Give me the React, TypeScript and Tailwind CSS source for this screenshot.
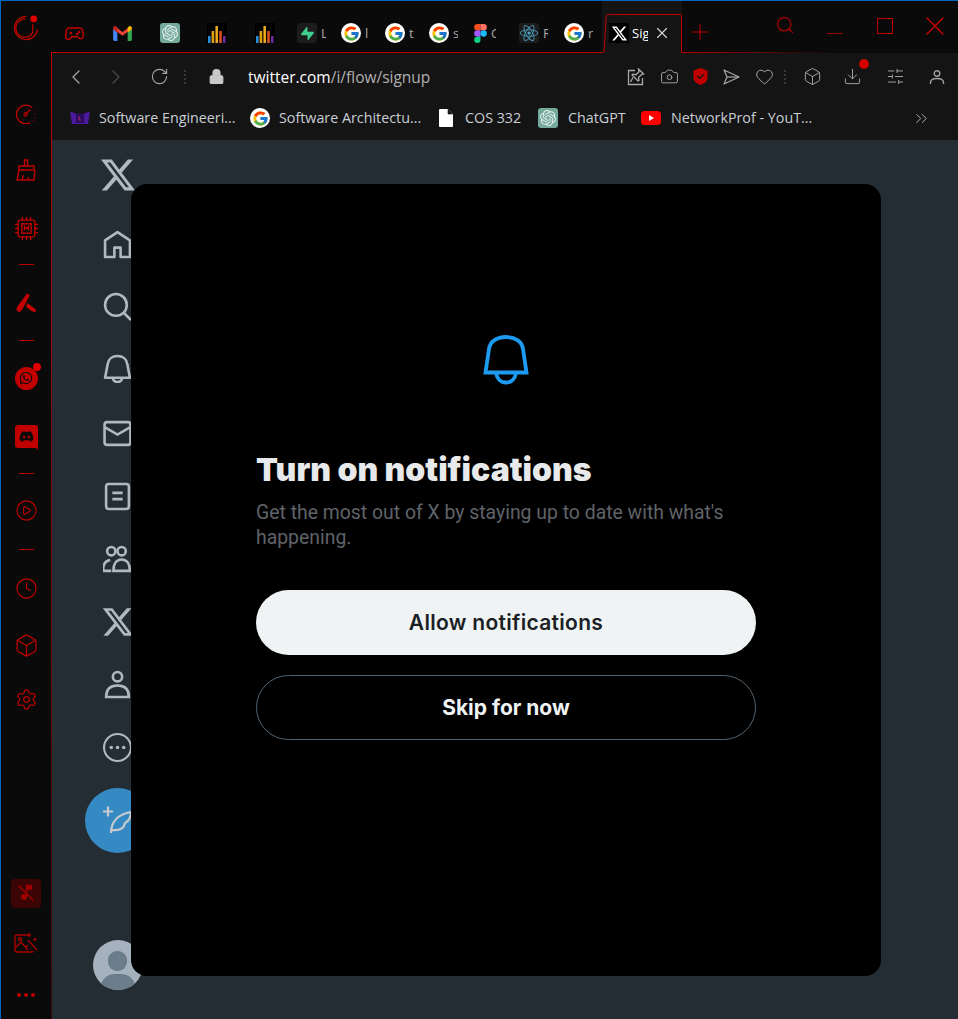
import React from "react";
import {
  Box,
  Camera,
  ChevronLeft,
  ChevronRight,
  ChevronsRight,
  Clock,
  CirclePlay,
  Download,
  Heart,
  Lock,
  Plus,
  RotateCw,
  Search,
  Settings,
  SlidersHorizontal,
  X,
} from "lucide-react";
import { FaDiscord, FaReact, FaWhatsapp } from "react-icons/fa";
import { FcGoogle } from "react-icons/fc";
import { SiOpenai, SiSupabase } from "react-icons/si";

const X_PATH =
  "M18.244 2.25h3.308l-7.227 8.26 8.502 11.24H16.17l-5.214-6.817L4.99 21.75H1.68l7.73-8.835L1.254 2.25H8.08l4.713 6.231zm-1.161 17.52h1.833L7.084 4.126H5.117z";

const XLogo = ({ className }: { className: string }) => (
  <svg viewBox="0 0 24 24" className={className} fill="currentColor">
    <path d={X_PATH} />
  </svg>
);

const GoogleIcon = () => (
  <span className="flex h-5 w-5 shrink-0 items-center justify-center rounded-full bg-white">
    <FcGoogle className="h-[17px] w-[17px]" />
  </span>
);

const GptIcon = () => (
  <span className="flex h-5 w-5 shrink-0 items-center justify-center rounded-[3px] bg-[#74aa9c]">
    <SiOpenai className="h-4 w-4 text-[#e4efec]" />
  </span>
);

const BarsIcon = () => (
  <svg viewBox="0 0 20 20" className="h-5 w-5 shrink-0">
    <rect width="20" height="20" fill="#000" />
    <rect x="1" y="13" width="2.6" height="7" fill="#2b8fd8" />
    <rect x="4.6" y="8" width="2.6" height="12" fill="#e0a010" />
    <rect x="8.4" y="3" width="2.6" height="17" fill="#e8a818" />
    <rect x="12.2" y="8" width="2.6" height="12" fill="#d84f20" />
    <rect x="16" y="13" width="2.6" height="7" fill="#6a2ca0" />
  </svg>
);

const GmailIcon = () => (
  <svg viewBox="0 0 20 16" className="h-[15px] w-[19px] shrink-0">
    <path d="M0 3v11.5A1.5 1.5 0 0 0 1.500 16H4.500V7z" fill="#4285f4" />
    <path d="M20 3v11.500a1.500 1.500 0 0 1-1.500 1.500H15.500V7z" fill="#34a853" />
    <path d="M0 3l10 7.500L20 3 18 .5 10 6.500 2 .5z" fill="#ea4335" />
    <path d="M0 3.500V2a2 2 0 0 1 3.200-1.500L4.500 1.500V7z" fill="#c5221f" />
    <path d="M20 3.500V2a2 2 0 0 0-3.200-1.500L15.500 1.500V7z" fill="#fbbc04" />
  </svg>
);

const FigmaIcon = () => (
  <svg viewBox="0 0 12 18" className="h-[19px] w-[13px] shrink-0">
    <path d="M3 0h3v6H3a3 3 0 0 1 0-6z" fill="#f24e1e" />
    <path d="M6 0h3a3 3 0 0 1 0 6H6z" fill="#ff7262" />
    <path d="M3 6h3v6H3a3 3 0 0 1 0-6z" fill="#a259ff" />
    <circle cx="9" cy="9" r="3" fill="#1abcfe" />
    <path d="M3 12h3v3a3 3 0 1 1-3-3z" fill="#0acf83" />
  </svg>
);

const GamepadIcon = () => (
  <svg viewBox="0 0 20 14" className="h-[13px] w-[19px] shrink-0" fill="none" stroke="#c80000" strokeWidth="1.500">
    <path d="M5 1h10a4 4 0 0 1 4 3.500l.5 5c.2 2.500-2.500 4-4.300 2.300L13 10.500H7l-2.200 2.300C3 14.500.3 13 .5 9.500l.5-5A4 4 0 0 1 5 1z" />
    <path d="M4.500 6.500h3M6 5v3" />
    <circle cx="13" cy="7.500" r=".6" />
    <circle cx="15" cy="5.500" r=".6" />
  </svg>
);

const tabs: { icon: React.ReactNode; label: string; width: string }[] = [
  { icon: <GamepadIcon />, label: "", width: "w-[48px]" },
  { icon: <GmailIcon />, label: "", width: "w-[47px]" },
  { icon: <GptIcon />, label: "", width: "w-[47px]" },
  { icon: <BarsIcon />, label: "", width: "w-[48px]" },
  { icon: <BarsIcon />, label: "", width: "w-[42px]" },
  {
    icon: (
      <span className="flex h-5 w-5 shrink-0 items-center justify-center rounded-[3px] bg-[#1c1c1c]">
        <SiSupabase className="h-[13px] w-[13px] text-[#3ecf8e]" />
      </span>
    ),
    label: "L",
    width: "w-[44px]",
  },
  { icon: <GoogleIcon />, label: "l", width: "w-[44px]" },
  { icon: <GoogleIcon />, label: "t", width: "w-[44px]" },
  { icon: <GoogleIcon />, label: "s", width: "w-[45px]" },
  { icon: <FigmaIcon />, label: "C", width: "w-[45px]" },
  {
    icon: (
      <span className="flex h-5 w-5 shrink-0 items-center justify-center rounded-[3px] bg-[#1c1c1c]">
        <FaReact className="h-[18px] w-[18px] text-[#4fa8c8]" />
      </span>
    ),
    label: "R",
    width: "w-[45px]",
  },
  { icon: <GoogleIcon />, label: "r", width: "w-[35px]" },
];

const TabStrip = () => (
  <div className="flex h-[52px] shrink-0 items-stretch">
    <div className="flex w-[550px] shrink-0 items-start border-b border-[#c00000] pl-[13px] pt-[22px]">
      {tabs.map((t, i) => (
        <div key={i} className={"flex h-5 shrink-0 items-center gap-[4px] overflow-hidden " + t.width}>
          {t.icon}
          <span className="w-[5px] overflow-hidden text-[13px] leading-5 text-[#a8a8a8]">{t.label}</span>
        </div>
      ))}
    </div>
    <div className="relative flex w-[80px] shrink-0 items-start bg-[#141414] pl-[7px] pt-[22px]">
      <svg viewBox="0 0 80 39" className="absolute bottom-0 left-0 h-[39px] w-[80px]" fill="none" stroke="#c00000">
        <path d="M0 38.500h.5C1.500 38.500 2 38 2.200 37L4 3.500C4.200 1.500 5.500 .5 7.500 .5h71C79.500 .5 79.500 1 79.500 2v36.500" />
      </svg>
      <span className="flex h-5 w-5 shrink-0 items-center justify-center bg-black">
        <XLogo className="h-[17px] w-[17px] text-white" />
      </span>
      <span className="ml-[3px] w-[16px] overflow-hidden text-[13px] leading-5 text-white">Sign</span>
      <X className="ml-[5px] mt-[1px] h-[18px] w-[18px] text-[#d8d8d8]" strokeWidth={1.500} />
    </div>
    <div className="relative flex flex-1 items-start">
      <div className="absolute inset-x-0 bottom-0 h-px bg-linear-to-r from-[#c00000] to-transparent to-[55%]" />
      <Plus className="ml-[5px] mt-[18px] h-[26px] w-[26px] text-[#b80000]" strokeWidth={1} />
      <Search className="ml-[62px] mt-[14px] h-[20px] w-[20px] text-[#960000]" strokeWidth={1.750} />
      <div className="ml-[32px] mt-[32px] h-px w-[16px] bg-[#960000]" />
      <div className="ml-[34px] mt-[17px] h-[16px] w-[16px] border border-[#c00000]" />
      <X className="ml-[26px] mt-[9px] h-[32px] w-[32px] text-[#c80000]" strokeWidth={1} />
    </div>
  </div>
);

const PinIcon = () => (
  <svg viewBox="0 0 18 18" className="h-[18px] w-[18px]" fill="none" stroke="#a8a8a8" strokeWidth="1.300">
    <path d="M8 2.500H1.500v14h14V10" />
    <path d="M11.500 1l5 5-2 .5-3 3 .5 3-1 .5-6-6 1-.8 3 .5 3-3z" />
    <path d="M6 9.500L3.500 14" />
  </svg>
);

const ShieldIcon = () => (
  <svg viewBox="0 0 16 18" className="h-[17px] w-[15px]">
    <path d="M8 0l7.500 2.500V10c0 4-3.500 6.500-7.500 8-4-1.500-7.500-4-7.500-8V2.500z" fill="#c00000" />
    <path d="M4.500 8.500L7 11l4.500-4.500" fill="none" stroke="#141414" strokeWidth="1.500" />
  </svg>
);

const SendIcon = () => (
  <svg viewBox="0 0 17 16" className="h-[16px] w-[17px]" fill="none" stroke="#a8a8a8" strokeWidth="1.200">
    <path d="M1 1l15 7-15 7 3-7z" strokeLinejoin="round" />
    <path d="M4 8h12" />
  </svg>
);

const UserIcon = () => (
  <svg viewBox="0 0 16 16" className="h-[16px] w-[16px]" fill="none" stroke="#a0a0a0" strokeWidth="1.400">
    <circle cx="8" cy="4.500" r="2.800" />
    <path d="M1.500 15v-1.500c0-2.500 2-4 6.500-4s6.500 1.500 6.500 4V15" />
  </svg>
);

const VDots = () => (
  <div className="flex flex-col gap-[2px]">
    <span className="h-[2px] w-[2px] bg-[#3a3a3a]" />
    <span className="h-[2px] w-[2px] bg-[#3a3a3a]" />
    <span className="h-[2px] w-[2px] bg-[#3a3a3a]" />
    <span className="h-[2px] w-[2px] bg-[#3a3a3a]" />
  </div>
);

const font = "font-['Open_Sans',sans-serif]";

const Toolbar = () => (
  <div className="flex h-[47px] shrink-0 items-center bg-[#141414] text-[#a8a8a8]">
    <ChevronLeft className="ml-[12px] h-[24px] w-[24px]" strokeWidth={1.250} />
    <ChevronRight className="ml-[16px] h-[24px] w-[24px] text-[#4a4a4a]" strokeWidth={1.250} />
    <RotateCw className="ml-[22px] h-[19px] w-[19px]" strokeWidth={1.400} />
    <div className="ml-[15px]">
      <VDots />
    </div>
    <Lock className="ml-[22px] h-[17px] w-[17px] fill-[#c8c8c8] text-[#c8c8c8]" strokeWidth={1.500} />
    <div className={"ml-[23px] text-[15.500px] leading-5 " + font}>
      <span className="text-white">twitter.com</span>
      <span className="text-[#b0b0b0]">/i/flow/signup</span>
    </div>
    <div className="ml-auto flex items-center">
      <PinIcon />
      <Camera className="ml-[15px] h-[19px] w-[19px]" strokeWidth={1.200} />
      <div className="ml-[14px]">
        <ShieldIcon />
      </div>
      <div className="ml-[15px]">
        <SendIcon />
      </div>
      <Heart className="ml-[15px] h-[19px] w-[19px]" strokeWidth={1.200} />
      <div className="ml-[10px]">
        <VDots />
      </div>
      <Box className="ml-[17px] h-[19px] w-[19px]" strokeWidth={1.200} />
      <div className="relative ml-[21px]">
        <Download className="h-[19px] w-[19px]" strokeWidth={1.200} />
        <span className="absolute -right-[7px] -top-[8px] h-[10px] w-[10px] rounded-full bg-[#d00000]" />
      </div>
      <SlidersHorizontal className="ml-[24px] h-[19px] w-[19px]" strokeWidth={1.200} />
      <div className="ml-[24px] mr-[13px]">
        <UserIcon />
      </div>
    </div>
  </div>
);

const BookIcon = () => (
  <svg viewBox="0 0 20 14" className="h-[14px] w-[20px] shrink-0">
    <path d="M0 1l4 .5L6 3h8l2-1.500L20 1l-2 12H2z" fill="#4a1a9a" />
    <path d="M6 2.500h8V12H6z" fill="#2a0e60" />
    <path d="M9 5v4h2" fill="none" stroke="#c02070" strokeWidth="1" />
  </svg>
);

const FileIcon = () => (
  <svg viewBox="0 0 14 18" className="h-[18px] w-[14px] shrink-0">
    <path d="M1 0h8l5 5v12a1 1 0 0 1-1 1H1a1 1 0 0 1-1-1V1a1 1 0 0 1 1-1z" fill="#fff" />
    <path d="M9 0v5h5" fill="#141414" stroke="#141414" strokeWidth=".6" />
  </svg>
);

const YoutubeIcon = () => (
  <svg viewBox="0 0 20 14" className="h-[14px] w-[20px] shrink-0">
    <rect width="20" height="14" rx="3.500" fill="#f00" />
    <path d="M8 4l5 3-5 3z" fill="#fff" />
  </svg>
);

const Bookmark = ({
  icon,
  label,
  className,
  gap,
}: {
  icon: React.ReactNode;
  label: string;
  className: string;
  gap: string;
}) => (
  <div className={"flex items-center " + className}>
    {icon}
    <span className={"whitespace-nowrap text-[14.300px] leading-5 text-[#c8ced4] " + gap + " " + font}>{label}</span>
  </div>
);

const Bookmarks = () => (
  <div className="flex h-[40px] shrink-0 items-center bg-[#141414] pb-[4px] pl-[18px]">
    <Bookmark icon={<BookIcon />} label="Software Engineeri..." className="w-[180px]" gap="ml-[9px]" />
    <Bookmark icon={<GoogleIcon />} label="Software Architectu..." className="w-[189px]" gap="ml-[9px]" />
    <Bookmark icon={<FileIcon />} label="COS 332" className="w-[99px]" gap="ml-[12px]" />
    <Bookmark icon={<GptIcon />} label="ChatGPT" className="w-[103px]" gap="ml-[10px]" />
    <Bookmark icon={<YoutubeIcon />} label="NetworkProf - YouT..." className="w-[270px]" gap="ml-[10px]" />
    <ChevronsRight className="ml-[1px] h-[19px] w-[19px] text-[#b0b0b0]" strokeWidth={1.250} />
  </div>
);

const RAIL = "#c40000";

const Cell = ({ className, children }: { className: string; children: React.ReactNode }) => (
  <div className={"flex h-[28px] items-center justify-center " + className}>{children}</div>
);

const RailLine = ({ className }: { className: string }) => (
  <div className={"mx-auto h-px w-[15px] bg-[#b80000] " + className} />
);

const Rail = () => (
  <div className="flex w-[50px] shrink-0 flex-col">
    <div className="flex h-[52px] items-center justify-center">
      <svg viewBox="0 0 28 28" className="h-[27px] w-[27px]" fill="none" stroke={RAIL} strokeWidth="1.200">
        <path d="M14 2.500A12 12 0 1 0 25.500 16" />
        <path d="M13 5a9.500 9.500 0 1 0 6 16.500" />
        <path d="M20.500 10v8a3.500 3.500 0 0 1-3 3.500" />
        <circle cx="21.500" cy="5" r="3.500" fill="#e00000" stroke="none" />
      </svg>
    </div>
    <Cell className="mt-[47px]">
      <svg viewBox="0 0 20 20" className="h-[20px] w-[20px]" fill="none" stroke={RAIL} strokeWidth="1.300">
        <path d="M14 18.700A9.300 9.300 0 1 1 16 3.500" />
        <path d="M18.500 7v.5M19.200 10v.5M18.500 13v.5M17 16v.5" />
        <circle cx="9.500" cy="10.500" r="1.500" />
        <path d="M11 9l3-3.500" />
      </svg>
    </Cell>
    <Cell className="mt-[28px]">
      <svg viewBox="0 0 20 22" className="h-[22px] w-[20px]" fill="none" stroke={RAIL} strokeWidth="1.400">
        <path d="M8.500 1h3v6h-3zM3 7h15v4H3zM3 11L1 21h17l1-10M6 21l1.500-5M12 21l.5-3" />
      </svg>
    </Cell>
    <Cell className="mt-[30px]">
      <svg viewBox="0 0 24 24" className="h-[25px] w-[25px]" fill="none" stroke={RAIL} strokeWidth="1.300">
        <rect x="4" y="4" width="16" height="16" rx="1.500" />
        <rect x="7.500" y="7.500" width="9" height="9" />
        <path d="M10 14v-4l2 2.500 2-2.500v4" />
        <path d="M8 1v3M12 1v3M16 1v3M8 20v3M12 20v3M16 20v3M1 8h3M1 12h3M1 16h3M20 8h3M20 12h3M20 16h3" />
      </svg>
    </Cell>
    <RailLine className="mt-[22px]" />
    <Cell className="mt-[24px]">
      <svg viewBox="0 0 20 20" className="h-[21px] w-[21px]">
        <path d="M10.500 .5c1 0 2 .8 2.500 1.800L8 12c-.7 1.500-2 4.500-4 5.500-1.800.9-3.800-.5-3.500-2.500.1-.7.4-1.300.7-2z" fill={RAIL} />
        <path d="M11 9.500l7.500 6c1.200 1 .2 3-1.500 2.500-2-.5-5.500-3-7.500-5.500z" fill={RAIL} />
      </svg>
    </Cell>
    <RailLine className="mt-[23px]" />
    <Cell className="mt-[23px]">
      <div className="relative flex h-[23px] w-[23px] items-center justify-center rounded-full bg-[#c00000]">
        <FaWhatsapp className="h-[14px] w-[14px] text-[#0a0a0a]" />
        <span className="absolute -right-[3px] -top-[4px] h-[8px] w-[8px] rounded-full bg-[#e00000]" />
      </div>
    </Cell>
    <Cell className="mt-[30px]">
      <div className="relative flex h-[23px] w-[23px] items-center justify-center rounded-[3px] bg-[#c00000]">
        <FaDiscord className="h-[15px] w-[15px] text-[#0a0a0a]" />
        <span className="absolute -bottom-[2px] right-0 h-0 w-0 border-l-[5px] border-t-[5px] border-l-transparent border-t-[#c00000]" />
      </div>
    </Cell>
    <RailLine className="mt-[23px]" />
    <Cell className="mt-[22px]">
      <CirclePlay className="h-[23px] w-[23px] text-[#c00000]" strokeWidth={1.200} />
    </Cell>
    <RailLine className="mt-[25px]" />
    <Cell className="mt-[24px]">
      <Clock className="h-[23px] w-[23px] text-[#c00000]" strokeWidth={1.200} />
    </Cell>
    <Cell className="mt-[29px]">
      <Box className="h-[25px] w-[25px] text-[#c00000]" strokeWidth={1.200} />
    </Cell>
    <Cell className="mt-[26px]">
      <Settings className="h-[23px] w-[23px] text-[#c00000]" strokeWidth={1.300} />
    </Cell>
    <div className="mt-auto flex flex-col pb-[10px]">
      <Cell className="">
        <div className="flex h-[29px] w-[30px] items-center justify-center rounded-[4px] bg-[#3c0505]">
          <svg viewBox="0 0 18 18" className="h-[18px] w-[18px]" fill="none" stroke="#a00000" strokeWidth="1.400">
            <circle cx="7" cy="13" r="3" fill="#a00000" stroke="none" />
            <path d="M9.500 13V1.500h5V5h-5" fill="#a00000" />
            <path d="M1.500 1.500L16.500 16.500" />
          </svg>
        </div>
      </Cell>
      <Cell className="mt-[22px]">
        <svg viewBox="0 0 24 20" className="h-[20px] w-[24px]" fill="none" stroke="#b00000" strokeWidth="1.300">
          <path d="M13 2H3a2 2 0 0 0-2 2v13a2 2 0 0 0 2 2h15a2 2 0 0 0 1.500-.8" />
          <path d="M1 15l6-6 7 8M12 14l2-2M14 7l9 10" />
          <circle cx="6" cy="6" r="1.500" />
          <path d="M15 0v4M13 2h4M21 5v3M19.500 6.500h3" />
        </svg>
      </Cell>
      <Cell className="mt-[24px]">
        <div className="flex gap-[3px]">
          <span className="h-[4px] w-[4px] rounded-full bg-[#c00000]" />
          <span className="h-[4px] w-[4px] rounded-full bg-[#c00000]" />
          <span className="h-[4px] w-[4px] rounded-full bg-[#c00000]" />
        </div>
      </Cell>
    </div>
  </div>
);

const navIcon = "h-[29px] w-[29px]";

const NavStroke = ({
  children,
  className,
  viewBox,
}: {
  children: React.ReactNode;
  className?: string;
  viewBox?: string;
}) => (
  <svg
    viewBox={viewBox || "0 0 28 28"}
    className={className || navIcon}
    fill="none"
    stroke="#afb9c1"
    strokeWidth="2.500"
  >
    {children}
  </svg>
);

const Nav = () => (
  <div className="flex w-[131px] shrink-0 flex-col items-center text-[#afb9c1]">
    <XLogo className="mt-[16px] h-[38px] w-[38px]" />
    <div className="mt-[36px]">
      <NavStroke>
        <path d="M14 2L2 10v16h9v-9h6v9h9V10z" strokeLinejoin="round" />
      </NavStroke>
    </div>
    <div className="mt-[33px]">
      <NavStroke>
        <circle cx="12.500" cy="12.500" r="10.500" />
        <path d="M20 20l7 7" />
      </NavStroke>
    </div>
    <div className="mt-[33px]">
      <NavStroke>
        <path d="M2 23l2.500-13C5 5 9 2 14 2s9 3 9.500 8L26 23z" strokeLinejoin="round" />
        <path d="M9.500 23c.3 2.500 2 4 4.500 4s4.200-1.500 4.500-4" />
      </NavStroke>
    </div>
    <div className="mt-[36px]">
      <NavStroke>
        <rect x="1.500" y="3" width="25" height="22" rx="2.500" />
        <path d="M2 8l12 7 12-7" />
      </NavStroke>
    </div>
    <div className="mt-[34px]">
      <NavStroke>
        <rect x="3" y="2" width="22" height="24" rx="2.500" />
        <path d="M9 10.500h10M9 16.500h10" />
      </NavStroke>
    </div>
    <div className="mt-[34px]">
      <NavStroke viewBox="2 0 28 28">
        <circle cx="10" cy="6" r="4" />
        <circle cx="20" cy="6" r="4" />
        <path d="M1 25h9M2 25c0-7 3-10 7-10.500M12 25c0-7 3-11 8-11s8 4 8 11z" />
      </NavStroke>
    </div>
    <XLogo className="mt-[31px] h-[34px] w-[34px]" />
    <div className="mt-[31px]">
      <NavStroke>
        <circle cx="14" cy="6.500" r="4.500" />
        <path d="M3 26c0-8 4-11 11-11s11 3 11 11z" />
      </NavStroke>
    </div>
    <div className="mt-[34px]">
      <svg viewBox="0 0 28 28" className={navIcon}>
        <circle cx="14" cy="14" r="13" fill="none" stroke="#afb9c1" strokeWidth="2" />
        <circle cx="8" cy="14" r="1.700" fill="#afb9c1" />
        <circle cx="14" cy="14" r="1.700" fill="#afb9c1" />
        <circle cx="20" cy="14" r="1.700" fill="#afb9c1" />
      </svg>
    </div>
    <div className="mt-[26px] flex h-[65px] w-[65px] items-center justify-center rounded-full bg-[#368ac4]">
      <svg viewBox="0 0 32 32" className="h-[32px] w-[32px]" fill="none" stroke="#c8ccd0" strokeWidth="2.200">
        <path d="M6 1.500v10M1 6.500h10" />
        <path d="M9 28c0-11 7-19 20-21 0 6-2 9-6 11-1 5-5 8-13 7" />
      </svg>
    </div>
    <div className="mt-[87px] h-[50px] w-[50px] overflow-hidden rounded-full bg-[#a5b2bd]">
      <div className="mx-auto mt-[11px] h-[20px] w-[19px] rounded-[9px] bg-[#6b7c8a]" />
      <div className="mx-auto mt-[3px] h-[30px] w-[36px] rounded-full bg-[#6b7c8a]" />
    </div>
  </div>
);

const Modal = () => (
  <div className="absolute inset-0 flex items-center justify-center pl-[2px]">
    <div className="flex h-[792px] w-[750px] flex-col rounded-[16px] bg-black px-[125px] pt-[151px] font-['Inter',sans-serif]">
      <svg viewBox="0 0 46 50" className="mx-auto h-[50px] w-[46px] shrink-0" fill="none" stroke="#1d9bf0" strokeWidth="3.800">
        <path d="M2.500 37.500L6 14C7 6.500 14 2 23 2s16 4.500 17 12l3.500 23.500z" />
        <path d="M13 38c1 6 5 9.500 10 9.500S32 44 33 38" />
      </svg>
      <h1 className="mt-[67px] text-[32px] font-black leading-[36px] text-[#e7e9ea]">Turn on notifications</h1>
      <p className="mt-[12px] font-['Roboto',sans-serif] text-[19.400px] leading-[25px] text-[#5f6368]">
        Get the most out of X by staying up to date with what's happening.
      </p>
      <button className="mt-[40px] h-[65px] w-full shrink-0 rounded-full bg-[#eff3f4] pt-[1px] text-[21px] font-semibold tracking-[0.3px] text-[#1a1f24]">
        Allow notifications
      </button>
      <button className="mt-[20px] h-[65px] w-full shrink-0 rounded-full border border-[#536471] pt-[1px] text-[21px] font-bold text-[#eff3f4]">
        Skip for now
      </button>
    </div>
  </div>
);

export default function App() {
  return (
    <div className="flex h-[1019px] w-[958px] overflow-hidden border-l border-t border-[#0067c0] bg-[#0a0a0a]">
      <Rail />
      <div className="mt-[51px] w-px shrink-0 bg-linear-to-b from-[#c00000] to-[#3a0808]" />
      <div className={"flex min-w-0 flex-1 flex-col " + font}>
        <TabStrip />
        <Toolbar />
        <Bookmarks />
        <div className="relative flex min-h-0 flex-1 bg-[#242d34]">
          <Nav />
          <Modal />
        </div>
      </div>
    </div>
  );
}
